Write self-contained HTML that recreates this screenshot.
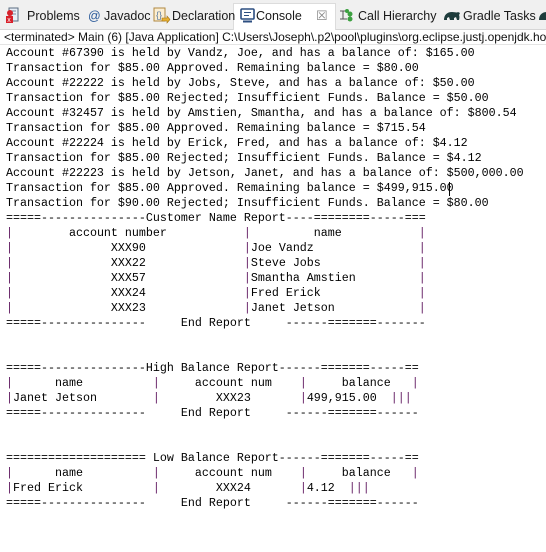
<!DOCTYPE html>
<html><head><meta charset="utf-8"><style>
*{margin:0;padding:0;box-sizing:border-box}
html,body{width:546px;height:552px;overflow:hidden;background:#fff;font-family:"Liberation Sans",sans-serif}
.bar{position:absolute;left:0;top:0;width:546px;height:30px;background:#f0f0f0;border-bottom:1px solid #d6d6d6}
.tab{position:absolute;top:0;height:30px;font-size:12.5px;color:#1a1a1a;line-height:32px;white-space:nowrap}
.active{position:absolute;left:233px;top:3px;width:103px;height:27px;background:#fff;border:1px solid #dcdcdc;border-bottom:none}
.info{position:absolute;left:0;top:30px;width:546px;height:15px;font-size:12px;line-height:14px;padding-left:4px;white-space:nowrap;overflow:hidden;color:#111;border-bottom:1px solid #e4e4e4}
pre{position:absolute;left:6px;top:46px;font-family:"Liberation Mono",monospace;font-size:11.67px;line-height:15px;color:#000;white-space:pre}
.p{color:#641e64}
.cur{position:absolute;left:449px;top:182px;width:1px;height:14px;background:#000}
</style></head><body>
<div class="bar">
 <div class="active"></div>
 <svg style="position:absolute;left:5px;top:7px" width="16" height="17" viewBox="0 0 16 17"><rect x="4" y="1" width="9" height="13" fill="#e8eef6" stroke="#5a6b80"/><line x1="6" y1="4" x2="11" y2="4" stroke="#7a8aa0"/><line x1="6" y1="7" x2="11" y2="7" stroke="#7a8aa0"/><circle cx="5" cy="6" r="3" fill="#d8202a"/><rect x="1" y="9" width="7" height="7" fill="#d8202a"/><text x="2.2" y="15" font-size="7" fill="#fff" font-family="Liberation Sans">x</text></svg>
 <div class="tab" style="left:27px">Problems</div>
 <div class="tab" style="left:88px;color:#2a5a9a">@</div>
 <div class="tab" style="left:104px">Javadoc</div>
 <svg style="position:absolute;left:153px;top:7px" width="18" height="17" viewBox="0 0 18 17"><rect x="1" y="1" width="11" height="13" fill="#fbeed2" stroke="#b08840"/><text x="3" y="11" font-size="9" fill="#5a7aa0" font-family="Liberation Sans">{}</text><path d="M9 11h5v-2l3 3.5-3 3.5v-2H9z" fill="#e8b030" stroke="#a07010" stroke-width=".6"/></svg>
 <div class="tab" style="left:172px">Declaration</div>
 <svg style="position:absolute;left:240px;top:8px" width="15" height="15" viewBox="0 0 15 15"><rect x="1" y="1" width="13" height="10" rx="1" fill="#fff" stroke="#2c4e80" stroke-width="1.6"/><line x1="4" y1="4.5" x2="11" y2="4.5" stroke="#2c4e80"/><line x1="4" y1="7.5" x2="9" y2="7.5" stroke="#2c4e80"/><rect x="3" y="12.5" width="9" height="2" fill="#2c4e80"/></svg>
 <div class="tab" style="left:256px">Console</div>
 <div class="tab" style="left:316px;color:#888;font-size:13px">&#x2612;</div>
 <svg style="position:absolute;left:339px;top:8px" width="16" height="14" viewBox="0 0 16 14"><path d="M1 3h6M4 3v8h4M1 11h3" stroke="#555" fill="none"/><circle cx="11" cy="6" r="2.5" fill="#3ca040"/><circle cx="11" cy="11" r="2.5" fill="#3ca040"/><circle cx="8" cy="3" r="2" fill="#3ca040"/></svg>
 <div class="tab" style="left:358px">Call Hierarchy</div>
 <svg style="position:absolute;left:443px;top:9px" width="18" height="12" viewBox="0 0 18 12"><path d="M1 11c0-5 3-8 8-8 3 0 5 1 6 0l2 1-1 2c1 2 0 5 0 5h-2l-1-3-2 1v2H7l-1-3-2 1v2z" fill="#1e3c3c"/></svg>
 <div class="tab" style="left:463px">Gradle Tasks</div>
 <svg style="position:absolute;left:538px;top:9px" width="10" height="12" viewBox="0 0 10 12"><path d="M1 11c0-5 3-8 8-8v8z" fill="#1e3c3c"/></svg>
</div>
<div class="info">&lt;terminated&gt; Main (6) [Java Application] C:\Users\Joseph\.p2\pool\plugins\org.eclipse.justj.openjdk.hotspot.jre.full</div>
<pre>Account #67390 is held by Vandz, Joe, and has a balance of: $165.00
Transaction for $85.00 Approved. Remaining balance = $80.00
Account #22222 is held by Jobs, Steve, and has a balance of: $50.00
Transaction for $85.00 Rejected; Insufficient Funds. Balance = $50.00
Account #32457 is held by Amstien, Smantha, and has a balance of: $800.54
Transaction for $85.00 Approved. Remaining balance = $715.54
Account #22224 is held by Erick, Fred, and has a balance of: $4.12
Transaction for $85.00 Rejected; Insufficient Funds. Balance = $4.12
Account #22223 is held by Jetson, Janet, and has a balance of: $500,000.00
Transaction for $85.00 Approved. Remaining balance = $499,915.00
Transaction for $90.00 Rejected; Insufficient Funds. Balance = $80.00
=====---------------Customer Name Report----========-----===
<span class="p">|</span>        account number           <span class="p">|</span>         name           <span class="p">|</span>
<span class="p">|</span>              XXX90              <span class="p">|</span>Joe Vandz               <span class="p">|</span>
<span class="p">|</span>              XXX22              <span class="p">|</span>Steve Jobs              <span class="p">|</span>
<span class="p">|</span>              XXX57              <span class="p">|</span>Smantha Amstien         <span class="p">|</span>
<span class="p">|</span>              XXX24              <span class="p">|</span>Fred Erick              <span class="p">|</span>
<span class="p">|</span>              XXX23              <span class="p">|</span>Janet Jetson            <span class="p">|</span>
=====---------------     End Report     ------=======-------


=====---------------High Balance Report------=======-----==
<span class="p">|</span>      name          <span class="p">|</span>     account num    <span class="p">|</span>     balance   <span class="p">|</span>
<span class="p">|</span>Janet Jetson        <span class="p">|</span>        XXX23       <span class="p">|</span>499,915.00  <span class="p">|||</span>
=====---------------     End Report     ------=======------


==================== Low Balance Report------=======-----==
<span class="p">|</span>      name          <span class="p">|</span>     account num    <span class="p">|</span>     balance   <span class="p">|</span>
<span class="p">|</span>Fred Erick          <span class="p">|</span>        XXX24       <span class="p">|</span>4.12  <span class="p">|||</span>
=====---------------     End Report     ------=======------</pre>
<div class="cur"></div>
</body></html>
